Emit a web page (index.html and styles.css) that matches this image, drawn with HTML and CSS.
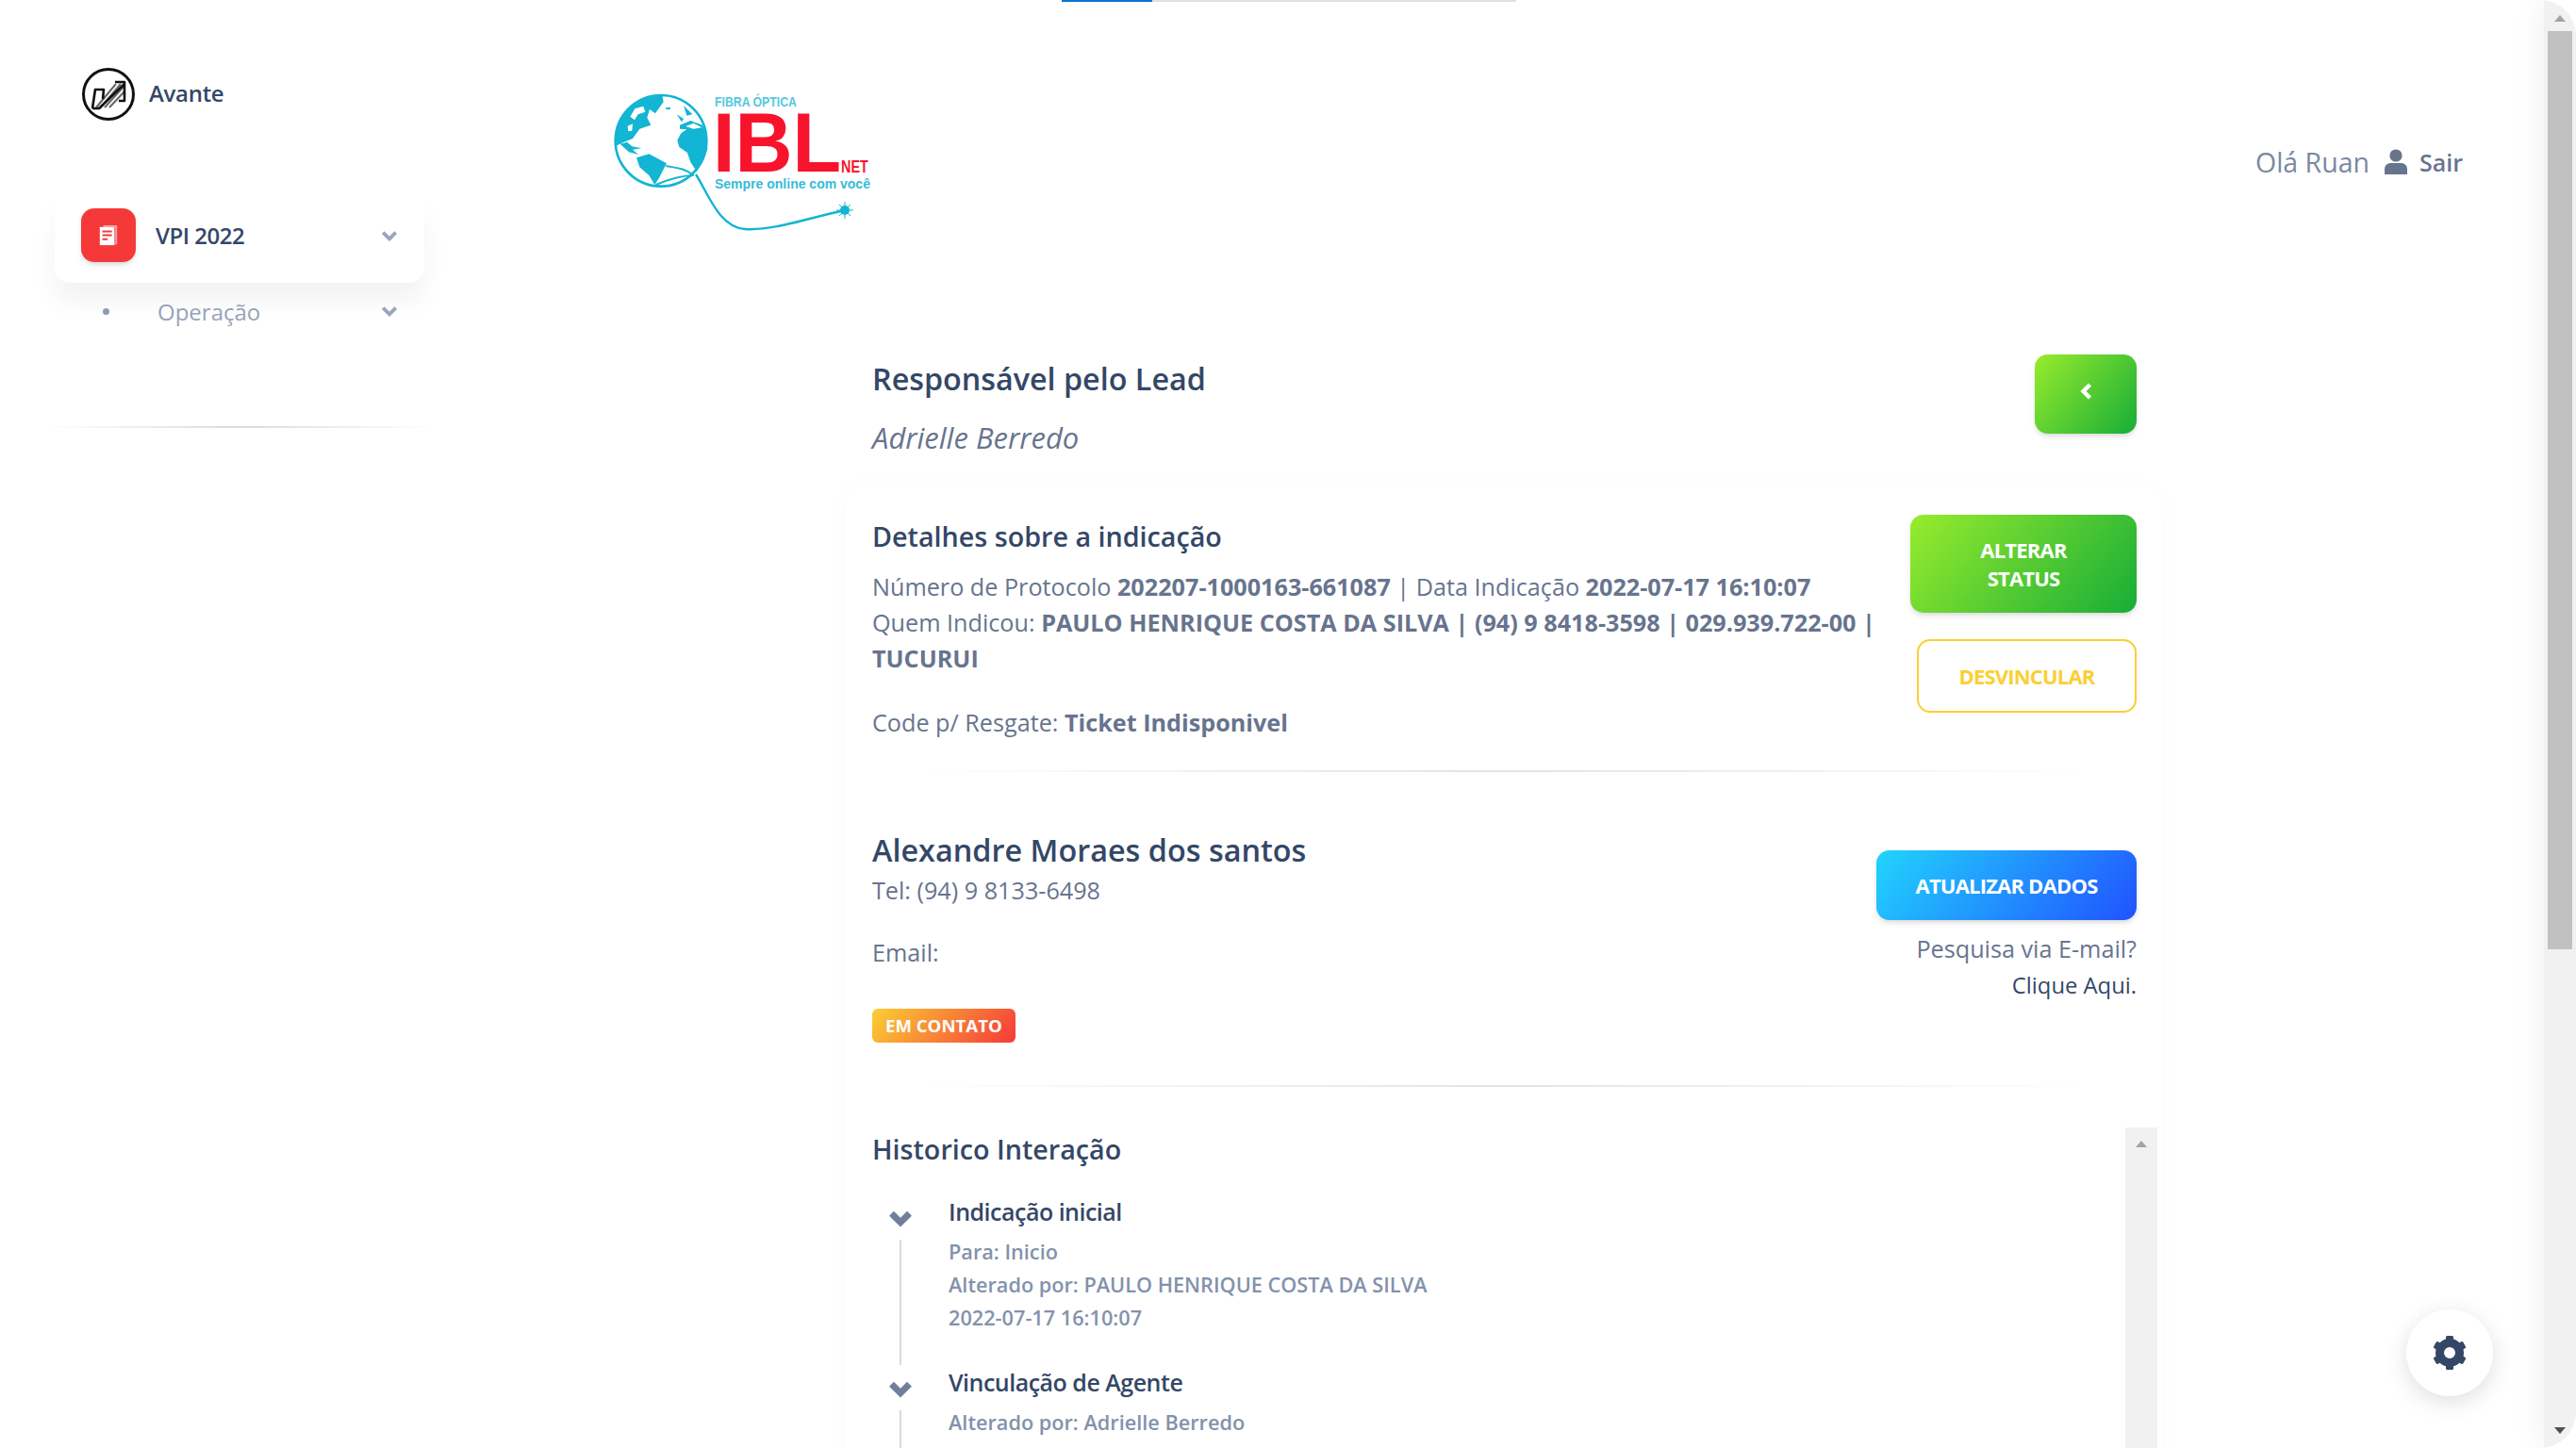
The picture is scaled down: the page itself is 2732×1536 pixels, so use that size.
FILE: index.html
```html
<!DOCTYPE html>
<html lang="pt-BR">
<head>
    <meta charset="UTF-8">
    <meta name="viewport" content="width=device-width, initial-scale=1.0">
    <title>Avante</title>
    <link rel="stylesheet" href="styles.css">
</head>
<body>
<div class="shell">
    <div class="top-progress"><span class="top-progress-fill"></span></div>

    <aside class="sidebar">
        <div class="brand">
            <svg class="brand-icon" viewBox="0 0 60 60">
                <circle cx="30" cy="30" r="26.5" fill="none" stroke="#111" stroke-width="3"/>
                <path d="M17 44L38 19M21 45L43 19M26 44L46 22M31 44L47 27" stroke="#666" stroke-width="2" fill="none"/>
                <path d="M13 45L16 25H25L24 35M37 17H47V37H41M13 45H20L47 19" stroke="#111" stroke-width="2.6" fill="none" stroke-linejoin="round"/>
            </svg>
            <span class="brand-name">Avante</span>
        </div>

        <div class="nav-card">
            <span class="nav-icon">
                <svg viewBox="0 0 24 26" width="22" height="24">
                    <path d="M6 1H22V23H20V3H6Z" fill="#fff" opacity=".55"/>
                    <rect x="2" y="3" width="17" height="21" fill="#fff"/>
                    <path d="M5 8H16M5 12.5H16M5 17H11" stroke="#f53939" stroke-width="2.2"/>
                </svg>
            </span>
            <span class="nav-label">VPI 2022</span>
            <svg class="nav-chevron" viewBox="0 0 16 12"><path d="M2 3L8 9L14 3" fill="none" stroke="currentColor" stroke-width="3.4"/></svg>
        </div>
        <div class="nav-sub">
            <span class="nav-dot"></span>
            <span class="nav-sub-label">Operação</span>
            <svg class="nav-chevron" viewBox="0 0 16 12"><path d="M2 3L8 9L14 3" fill="none" stroke="currentColor" stroke-width="3.4"/></svg>
        </div>
        <div class="sidebar-line"></div>
    </aside>

    <main class="main">
        <header class="header">
            <svg class="logo" viewBox="0 0 275 155">
                <g transform="translate(-5,-3) scale(.3333)">
                    <circle cx="168" cy="172" r="145" fill="#fff" stroke="#12b5d3" stroke-width="8"/>
                    <path fill="#12b5d3" d="M22 190L30 120L60 70L110 38L172 26L176 48L150 85L132 72L124 98L136 122L100 134L78 165L50 176Z"/>
                    <path fill="#fff" d="M70 95L85 70L112 62L118 80L95 88L84 106ZM62 125L78 118L76 140L64 142Z"/>
                    <path fill="#12b5d3" d="M240 60L268 88L250 92ZM218 88L240 102L234 112ZM184 66H198V72H184ZM228 122L262 108L300 122L312 150L316 200L282 270L262 240L252 210L226 192L220 170L232 148L250 136L228 134Z"/>
                    <path fill="#fff" d="M246 126L272 116L298 130L272 134Z"/>
                    <path fill="#12b5d3" d="M38 182L60 176L76 190L106 196L78 200L96 216L66 208ZM90 226L130 214L186 244L162 290L148 312L130 282L100 256Z"/>
                    <path fill="none" stroke="#12b5d3" stroke-width="6" d="M184 252C210 258 240 256 272 282M152 312C190 296 230 282 272 282"/>
                </g>
                <path d="M88 90C100 108 112 146 140 148C170 150 208 136 246 128" fill="none" stroke="#12b5d3" stroke-width="2.4"/>
                <circle cx="246" cy="128" r="5" fill="#12b5d3"/>
                <path d="M246 119V137M237 128H255M240 122L252 134M252 122L240 134" stroke="#12b5d3" stroke-width="1"/>
                <text class="logo-fibra" transform="translate(108,18) scale(.82,1)">FIBRA ÓPTICA</text>
                <text class="logo-ibl" transform="translate(106,87) scale(.95,1)">IBL</text>
                <text class="logo-net" transform="translate(242,88) scale(.8,1)">NET</text>
                <text class="logo-slogan" x="108" y="105">Sempre online com você</text>
            </svg>
            <div class="user">
                <span class="user-name">Olá Ruan</span>
                <svg class="user-icon" viewBox="0 0 24 27">
                    <circle cx="12" cy="7" r="6.6" fill="#67748e"/>
                    <path d="M0 27V22C0 17 3 15 7 15H17C21 15 24 17 24 22V27Z" fill="#67748e"/>
                </svg>
                <span class="user-exit">Sair</span>
            </div>
        </header>

        <section class="content">
            <div class="lead-row">
                <div class="lead-text">
                    <h2 class="title">Responsável pelo Lead</h2>
                    <p class="lead-name">Adrielle Berredo</p>
                </div>
                <button class="btn btn-success btn-back">
                    <svg viewBox="0 0 15 18" width="15" height="18"><path d="M11.5 2L4.5 9L11.5 16" fill="none" stroke="#fff" stroke-width="4.4"/></svg>
                </button>
            </div>

            <div class="card">
                <div class="detail-row">
                    <div class="detail-text">
                        <h3 class="subtitle">Detalhes sobre a indicação</h3>
                        <p class="info">Número de Protocolo <b>202207-1000163-661087</b> | Data Indicação <b>2022-07-17 16:10:07</b><br>
                        Quem Indicou: <b>PAULO HENRIQUE COSTA DA SILVA | (94) 9 8418-3598 | 029.939.722-00 | TUCURUI</b></p>
                        <p class="info code">Code p/ Resgate: <b>Ticket Indisponivel</b></p>
                    </div>
                    <div class="detail-actions">
                        <button class="btn btn-success btn-status">ALTERAR<br>STATUS</button>
                        <button class="btn btn-outline">DESVINCULAR</button>
                    </div>
                </div>

                <div class="line line-detail"></div>

                <div class="contact-row">
                    <div>
                        <h2 class="contact-name">Alexandre Moraes dos santos</h2>
                        <p class="info">Tel: (94) 9 8133-6498</p>
                        <p class="info email">Email:</p>
                        <span class="badge">EM CONTATO</span>
                    </div>
                    <div class="contact-actions">
                        <button class="btn btn-info">ATUALIZAR DADOS</button>
                        <p class="info search">Pesquisa via E-mail?<br><span class="search-link">Clique Aqui.</span></p>
                    </div>
                </div>

                <div class="line line-contact"></div>

                <div class="history">
                    <div class="history-body">
                        <h3 class="subtitle">Historico Interação</h3>
                        <div class="timeline">
                            <div class="tl-item">
                                <div class="tl-mark">
                                    <svg class="tl-chevron" viewBox="0 0 24 18"><path d="M3 4L12 13L21 4" fill="none" stroke="currentColor" stroke-width="6.5"/></svg>
                                    <span class="tl-line"></span>
                                </div>
                                <div>
                                    <h4 class="tl-title">Indicação inicial</h4>
                                    <p class="tl-text">Para: Inicio</p>
                                    <p class="tl-text">Alterado por: PAULO HENRIQUE COSTA DA SILVA</p>
                                    <p class="tl-text">2022-07-17 16:10:07</p>
                                </div>
                            </div>
                            <div class="tl-item">
                                <div class="tl-mark">
                                    <svg class="tl-chevron" viewBox="0 0 24 18"><path d="M3 4L12 13L21 4" fill="none" stroke="currentColor" stroke-width="6.5"/></svg>
                                    <span class="tl-line"></span>
                                </div>
                                <div>
                                    <h4 class="tl-title">Vinculação de Agente</h4>
                                    <p class="tl-text">Alterado por: Adrielle Berredo</p>
                                    <p class="tl-text">2022-07-17 18:22:00</p>
                                </div>
                            </div>
                        </div>
                    </div>
                    <div class="inner-scroll"><span class="arrow-up"></span></div>
                </div>
            </div>
        </section>
    </main>

    <div class="page-scroll">
        <span class="page-arrow-up"></span>
        <span class="page-thumb"></span>
        <span class="page-arrow-down"></span>
    </div>

    <button class="fab">
        <svg viewBox="0 0 36 36" width="36" height="36">
            <circle cx="18" cy="18" r="10.5" fill="none" stroke="#344767" stroke-width="9"/>
            <g fill="#344767">
                <rect x="14" y="0" width="8" height="8" rx="1.5"/>
                <rect x="14" y="0" width="8" height="8" rx="1.5" transform="rotate(60 18 18)"/>
                <rect x="14" y="0" width="8" height="8" rx="1.5" transform="rotate(120 18 18)"/>
                <rect x="14" y="0" width="8" height="8" rx="1.5" transform="rotate(180 18 18)"/>
                <rect x="14" y="0" width="8" height="8" rx="1.5" transform="rotate(240 18 18)"/>
                <rect x="14" y="0" width="8" height="8" rx="1.5" transform="rotate(300 18 18)"/>
            </g>
        </svg>
    </button>
</div>
</body>
</html>
```

FILE: styles.css
```css
* {
    box-sizing: border-box;
}
html, body {
    margin: 0;
    height: 100%;
    background-color: #fff;
}
body {
    font-family: "Open Sans", sans-serif;
    color: #67748e;
    font-size: 24px;
    overflow: hidden;
}
h2, h3, h4, p {
    margin: 0;
}
button {
    font-family: inherit;
    border: none;
    cursor: pointer;
}
.shell {
    position: relative;
    display: flex;
    height: 1536px;
    overflow: hidden;
    border-radius: 0 38px 38px 0;
    background-color: #fff;
}
.top-progress {
    position: absolute;
    top: 0;
    left: 1126px;
    width: 482px;
    height: 2px;
    background-color: #e0e0e0;
}
.top-progress-fill {
    display: block;
    width: 96px;
    height: 2px;
    background-color: #0a72d0;
}

/* sidebar */
.sidebar {
    flex: 0 0 510px;
    padding: 70px 50px 0 58px;
}
.brand {
    display: flex;
    align-items: center;
    gap: 13px;
    padding-left: 29px;
    height: 60px;
}
.brand-icon {
    width: 60px;
    height: 60px;
    margin-left: -2px;
}
.brand-name {
    font-size: 24px;
    font-weight: 600;
    color: #344767;
    margin-top: -4px;
    letter-spacing: -.3px;
}
.nav-card {
    display: flex;
    align-items: center;
    width: 392px;
    height: 93px;
    margin-top: 77px;
    padding: 0 28px 8px;
    background-color: #fff;
    border-radius: 16px;
    box-shadow: 0 20px 27px rgba(0,0,0,.05);
}
.nav-icon {
    display: flex;
    align-items: center;
    justify-content: center;
    width: 58px;
    height: 57px;
    border-radius: 14px;
    background-color: #f53939;
    box-shadow: 0 4px 7px -1px rgba(0,0,0,.11), 0 2px 4px -1px rgba(0,0,0,.07);
}
.nav-label {
    flex: 1;
    margin-left: 21px;
    font-size: 24px;
    font-weight: 600;
    color: #344767;
    letter-spacing: -.5px;
}
.nav-chevron {
    width: 18px;
    height: 14px;
    color: #9aa5bb;
}
.nav-sub {
    display: flex;
    align-items: center;
    width: 392px;
    height: 60px;
    margin-top: 0;
    padding: 0 28px 0 51px;
}
.nav-dot {
    width: 7px;
    height: 7px;
    border-radius: 50%;
    background-color: #8f9bb3;
}
.nav-sub-label {
    flex: 1;
    margin-left: 51px;
    color: #98a3b8;
    font-size: 24px;
}
.sidebar-line {
    width: 410px;
    height: 2px;
    margin: 92px 0 0 -8px;
    background: linear-gradient(90deg, rgba(0,0,0,0), rgba(0,0,0,.14), rgba(0,0,0,0));
}

/* main */
.main {
    flex: 1;
    min-width: 0;
    height: 1536px;
    overflow: hidden;
}
.header {
    display: flex;
    align-items: center;
    justify-content: space-between;
    height: 155px;
    margin-top: 95px;
    padding: 0 86px 0 140px;
}
.logo {
    width: 275px;
    height: 155px;
}
.logo text {
    font-family: "Liberation Sans", sans-serif;
    font-weight: 700;
}
.logo-fibra {
    font-size: 15px;
    fill: #56c8de;
}
.logo-ibl {
    font-size: 89px;
    fill: #f8132d;
}
.logo-net {
    font-size: 18px;
    fill: #f8132d;
}
.logo-slogan {
    font-size: 14px;
    fill: #36bcd6;
}
.user {
    display: flex;
    align-items: center;
    margin-top: -2px;
}
.user-name {
    font-size: 28.5px;
    color: #7b88a1;
}
.user-icon {
    width: 24px;
    height: 27px;
    margin: 0 13px 0 16px;
}
.user-exit {
    font-size: 25px;
    font-weight: 600;
    color: #67748e;
}
.content {
    width: 1396px;
    margin: 126px 0 0 386px;
}
.lead-row {
    display: flex;
    justify-content: space-between;
    height: 141px;
    padding: 0 26px 0 29px;
}
.lead-text {
    padding-top: 3px;
}
.title {
    font-size: 32.3px;
    line-height: 44px;
    font-weight: 600;
    color: #344767;
}
.lead-name {
    margin-top: 22px;
    font-size: 31px;
    line-height: 38px;
    font-style: italic;
    color: #67748e;
}
.btn {
    border-radius: 14px;
    color: #fff;
    font-weight: 700;
    font-size: 22px;
    line-height: 30px;
    letter-spacing: -.8px;
    box-shadow: 0 4px 7px -1px rgba(0,0,0,.11), 0 2px 4px -1px rgba(0,0,0,.07);
}
.btn-success {
    background-image: linear-gradient(310deg, #17ad37, #98ec2d);
}
.btn-back {
    width: 108px;
    height: 84px;
    padding: 0 0 6px;
}
.card {
    padding-top: 29px;
    background-color: #fff;
    border-radius: 16px 16px 0 0;
    box-shadow: 0 0 30px rgba(0,0,0,.02);
}
.detail-row {
    display: flex;
    padding: 0 26px 0 29px;
}
.detail-text {
    flex: 1;
    padding-top: 1px;
}
.subtitle {
    font-size: 28.7px;
    line-height: 44px;
    font-weight: 600;
    color: #344767;
}
.info {
    font-size: 25.2px;
    line-height: 38px;
    color: #67748e;
}
.info b {
    font-weight: 700;
}
.detail-text .info {
    margin-top: 12px;
    max-width: 1072px;
}
.detail-text .code {
    margin-top: 30px;
}
.detail-actions {
    display: flex;
    flex-direction: column;
    align-items: flex-end;
    gap: 28px;
}
.btn-status {
    width: 240px;
    height: 104px;
    padding: 0;
}
.btn-outline {
    width: 233px;
    height: 78px;
    background: #fff;
    border: 2px solid #fbcf33;
    color: #fbcf33;
    box-shadow: none;
}
.line {
    height: 2px;
    background: linear-gradient(90deg, rgba(0,0,0,0) 5%, rgba(0,0,0,.11), rgba(0,0,0,0) 95%);
}
.line-detail {
    margin-top: 32px;
}
.contact-row {
    display: flex;
    justify-content: space-between;
    padding: 60px 26px 0 29px;
}
.contact-name {
    font-size: 32.4px;
    line-height: 44px;
    font-weight: 600;
    color: #344767;
}
.contact-row .info {
    margin-top: 2px;
}
.contact-row .email {
    margin-top: 28px;
}
.badge {
    display: inline-block;
    margin-top: 41px;
    padding: 0 14px;
    height: 36px;
    line-height: 36px;
    border-radius: 6px;
    font-size: 18.6px;
    font-weight: 700;
    color: #fff;
    background-image: linear-gradient(310deg, #f53939, #fbcf33);
}
.contact-actions {
    display: flex;
    flex-direction: column;
    align-items: flex-end;
    padding-top: 23px;
}
.btn-info {
    width: 276px;
    height: 74px;
    background-image: linear-gradient(310deg, #2152ff, #21d4fd);
}
.contact-row .search {
    margin-top: 11px;
    text-align: right;
}
.search-link {
    color: #344767;
    font-size: 23.8px;
}
.line-contact {
    margin-top: 45px;
}
.history {
    display: flex;
    margin: 43px 4px 0 0;
}
.history-body {
    flex: 1;
    padding: 1px 0 0 29px;
}
.timeline {
    margin-top: 26px;
}
.tl-item {
    display: flex;
    gap: 21px;
    padding-bottom: 33px;
}
.tl-mark {
    display: flex;
    flex-direction: column;
    align-items: center;
    flex: 0 0 60px;
    padding-top: 16px;
    margin-bottom: -33px;
}
.tl-chevron {
    width: 26px;
    height: 19px;
    color: #6f7f9c;
}
.tl-line {
    flex: 1;
    width: 2px;
    margin-top: 13px;
    background-color: #d5dae3;
}
.tl-title {
    font-size: 25px;
    line-height: 36px;
    font-weight: 600;
    color: #344767;
    letter-spacing: -.5px;
}
.tl-title + .tl-text {
    margin-top: 7px;
}
.tl-text {
    font-size: 21.7px;
    line-height: 35px;
    font-weight: 600;
    color: #8392ab;
}
.inner-scroll {
    flex: 0 0 34px;
    height: 400px;
    padding-top: 14px;
    background-color: #f1f1f1;
    display: flex;
    justify-content: center;
}
.arrow-up, .page-arrow-up {
    width: 0;
    height: 0;
    border-left: 6px solid transparent;
    border-right: 6px solid transparent;
    border-bottom: 7px solid #a3a3a3;
}
.page-scroll {
    position: relative;
    flex: 0 0 34px;
    display: flex;
    flex-direction: column;
    align-items: center;
    height: 1536px;
    padding-top: 16px;
    background-color: #f1f1f1;
    box-shadow: -6px 0 30px rgba(0,0,0,.05);
}
.page-thumb {
    width: 26px;
    height: 974px;
    margin-top: 10px;
    background-color: #c1c1c1;
}
.page-arrow-down {
    width: 0;
    height: 0;
    margin-top: auto;
    margin-bottom: 15px;
    border-left: 6px solid transparent;
    border-right: 6px solid transparent;
    border-top: 7px solid #505050;
}
.fab {
    position: absolute;
    right: 88px;
    bottom: 55px;
    display: flex;
    align-items: center;
    justify-content: center;
    width: 92px;
    height: 92px;
    padding: 0;
    border-radius: 50%;
    background-color: #fff;
    box-shadow: 0 6px 24px rgba(0,0,0,.13);
}
```
